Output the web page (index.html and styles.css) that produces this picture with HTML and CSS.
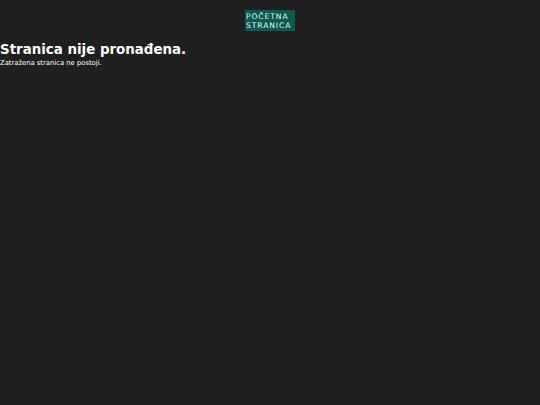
FILE: index.html
```
<!DOCTYPE html>
<html lang="hr">
<head>
<meta charset="utf-8">
<link rel="stylesheet" href="styles.css">
</head>
<body>
<div class="top">
  <a class="home" href="#">POČETNA STRANICA</a>
</div>
<h1 class="title">Stranica nije pronađena.</h1>
<p class="desc">Zatražena stranica ne postoji.</p>
</body>
</html>
```
FILE: styles.css
```
html, body {
  margin: 0;
  padding: 0;
  background: #1f1f1f;
  color: #ffffff;
  font-family: "DejaVu Sans", sans-serif;
}
.top {
  display: flex;
  justify-content: center;
  padding-top: 10px;
}
.home {
  display: block;
  width: 49px;
  background: #0b5a50;
  color: #e8f0ee;
  text-decoration: none;
  font-size: 7.6px;
  line-height: 9px;
  letter-spacing: 0.9px;
  padding: 1.5px 0 1.5px 1px;
}
.title {
  margin: 11px 0 0 0;
  font-size: 13.4px;
  line-height: 16px;
  font-weight: bold;
}
.desc {
  margin: 1px 0 0 0;
  font-size: 6.8px;
  line-height: 9px;
}
```
